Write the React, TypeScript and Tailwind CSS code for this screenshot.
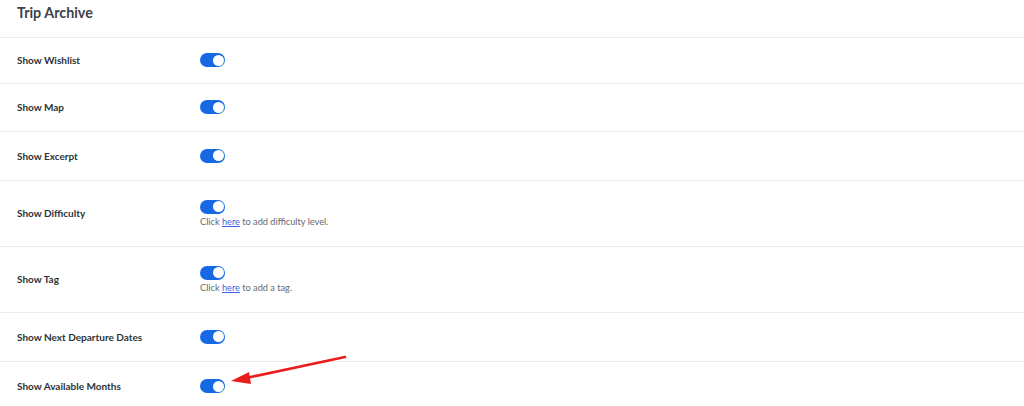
import React from "react";

function Toggle() {
  return (
    <div className="w-[25px] h-[14px] rounded-full bg-[#1668e3] relative shrink-0">
      <div className="absolute right-[1.5px] top-[1.5px] w-[11px] h-[11px] rounded-full bg-white" />
    </div>
  );
}

type Row = { label: string; h: string; help?: string };

export default function App() {
  const rows: Row[] = [
    { label: "Show Wishlist", h: "h-[46px]" },
    { label: "Show Map", h: "h-[48px]" },
    { label: "Show Excerpt", h: "h-[49px]" },
    { label: "Show Difficulty", h: "h-[66px]", help: "to add difficulty level." },
    { label: "Show Tag", h: "h-[66px]", help: "to add a tag." },
    { label: "Show Next Departure Dates", h: "h-[49px]" },
    { label: "Show Available Months", h: "h-[50px]" },
  ];
  return (
    <div
      className="w-[1024px] h-[406px] bg-white overflow-hidden relative"
      style={{ fontFamily: 'Lato, "Open Sans", sans-serif' }}
    >
      <div className="h-[37px] flex items-start pl-[17px] pt-[5px]">
        <h2 className="text-[14.3px] font-bold text-[#3c434a] leading-[16px]">Trip Archive</h2>
      </div>
      {rows.map((r) => (
        <div key={r.label} className={`${r.h} border-t border-[#ececec] flex items-center pb-[1px]`}>
          <div className="w-[200px] shrink-0 pl-[17px] text-[10px] font-bold text-[#2c3338] leading-none">
            {r.label}
          </div>
          <div className="flex flex-col justify-center">
            <Toggle />
            {r.help && (
              <div className="mt-[3px] text-[9.2px] text-[#646970] leading-[10px]">
                Click <a className="text-[#3f5fe0] underline" href="#">here</a> {r.help}
              </div>
            )}
          </div>
        </div>
      ))}
      <svg className="absolute left-0 top-0 pointer-events-none" width="1024" height="406">
        <line x1="345" y1="357" x2="246" y2="378" stroke="#ea1c1c" strokeWidth="2.6" strokeLinecap="round" />
        <polygon points="231,381 249,372 251,384" fill="#ea1c1c" />
      </svg>
    </div>
  );
}
